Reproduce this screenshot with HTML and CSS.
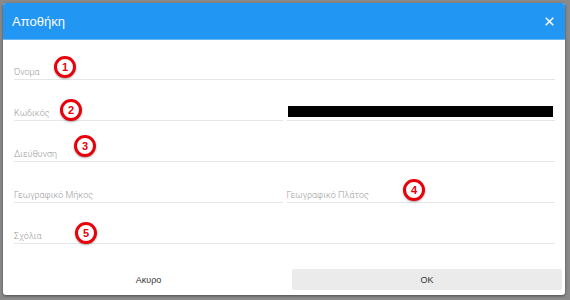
FILE: index.html
```html
<!DOCTYPE html>
<html lang="el">
<head>
<meta charset="utf-8">
<title>Αποθήκη</title>
<link rel="stylesheet" href="styles.css">
</head>
<body>
<div class="dialog">
  <div class="header">
    <span class="title">Αποθήκη</span>
    <svg class="close" width="9" height="9" viewBox="0 0 9 9"><path d="M0.7 0.7L8.3 8.3M8.3 0.7L0.7 8.3" stroke="#fff" stroke-width="1.5" fill="none"/></svg>
  </div>
  <div class="form">
    <div class="field full"><span class="label">Όνομα</span></div>
    <div class="field"><span class="label">Κωδικός</span></div>
    <div class="field field-redact"><span class="redact"></span></div>
    <div class="field full"><span class="label">Διεύθυνση</span></div>
    <div class="field"><span class="label">Γεωγραφικό Μήκος</span></div>
    <div class="field"><span class="label">Γεωγραφικό Πλάτος</span></div>
    <div class="field full"><span class="label">Σχόλια</span></div>
  </div>
  <div class="footer">
    <button class="btn">Ακυρο</button>
    <button class="btn btn-ok">OK</button>
  </div>
  <span class="badge b1">1</span>
  <span class="badge b2">2</span>
  <span class="badge b3">3</span>
  <span class="badge b4">4</span>
  <span class="badge b5">5</span>
</div>
</body>
</html>
```
FILE: styles.css
```css
html, body {
  margin: 0;
  padding: 0;
  background: #8a8a8a;
}
body {
  padding: 3px;
  font-family: Roboto, "Liberation Sans", sans-serif;
}
.dialog {
  position: relative;
  width: 562px;
  height: 292px;
  background: #fff;
  border-radius: 3px;
  box-shadow: 0 1px 3px rgba(0,0,0,0.45);
  overflow: hidden;
  display: flex;
  flex-direction: column;
}
.header {
  height: 36px;
  background: #2196f3;
  border-bottom: 1px solid #6bb6f5;
  display: flex;
  align-items: center;
  justify-content: space-between;
  padding: 0 11px 0 9px;
  flex: none;
}
.title {
  color: #fff;
  font-size: 13px;
  font-family: "Liberation Sans", Arial, sans-serif;
}
.close {
  display: block;
}
.form {
  display: grid;
  grid-template-columns: 1fr 1fr;
  column-gap: 4px;
  grid-auto-rows: 41px;
  padding: 0 10px 0 11px;
  margin-top: -1px;
}
.field {
  border-bottom: 1px solid #e6e6e6;
  display: flex;
  align-items: flex-end;
  padding-bottom: 1px;
  box-sizing: border-box;
}
.field-redact {
  padding-bottom: 3px;
}
.field.full {
  grid-column: 1 / 3;
}
.label {
  font-size: 9px;
  font-weight: 300;
  color: #9a9a9a;
  line-height: 12px;
}
.redact {
  display: block;
  height: 11px;
  background: #000;
  margin: 0 2px 0 1px;
  flex: 1;
}
.footer {
  display: grid;
  grid-template-columns: 269px 270px;
  column-gap: 9px;
  padding: 0 3px 0 11px;
  margin-top: 25px;
}
.btn {
  height: 21px;
  border: none;
  background: transparent;
  font-family: "Liberation Sans", Arial, sans-serif;
  font-size: 9px;
  color: #333;
  padding: 0;
  border-radius: 2px;
}
.btn-ok {
  background: #ebebeb;
}
.badge {
  position: absolute;
  width: 22px;
  height: 22px;
  box-sizing: border-box;
  border: 3px solid #e8000b;
  border-radius: 50%;
  background: #fff;
  color: #e8000b;
  font-family: "Liberation Sans", Arial, sans-serif;
  font-weight: bold;
  font-size: 11px;
  display: flex;
  align-items: center;
  justify-content: center;
  box-shadow: 0 1px 2px rgba(0,0,0,0.35);
}
.b1 { left: 51px; top: 53px; }
.b2 { left: 57px; top: 96px; }
.b3 { left: 71px; top: 132px; }
.b4 { left: 400px; top: 176px; }
.b5 { left: 72px; top: 219px; }
```
